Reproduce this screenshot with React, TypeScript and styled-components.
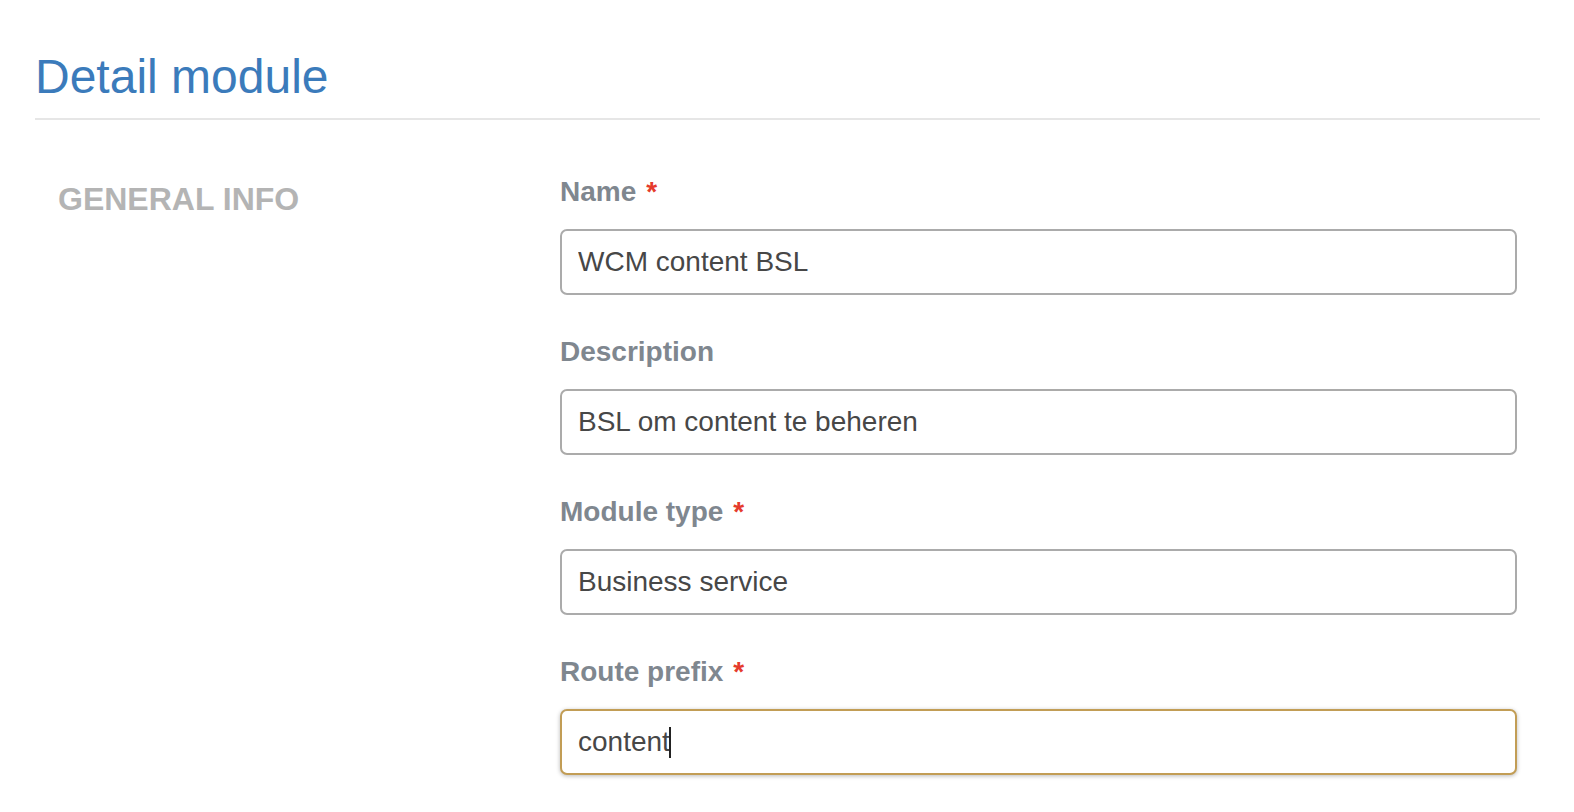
import React from "react";
import styled, { createGlobalStyle } from "styled-components";

const GlobalStyle = createGlobalStyle`
  html, body {
    margin: 0;
    padding: 0;
    background: #ffffff;
    font-family: "Liberation Sans", Arial, Helvetica, sans-serif;
  }
  * { box-sizing: border-box; }
`;

const Page = styled.div`
  padding: 0 34px 0 35px;
`;

const Header = styled.header`
  margin-top: 50px;
  padding-bottom: 15px;
  border-bottom: 2px solid #e6e6e6;
`;

const Title = styled.h1`
  margin: 0;
  font-size: 48px;
  line-height: 53px;
  font-weight: 400;
  color: #3b7bbb;
`;

const Body = styled.div`
  display: grid;
  grid-template-columns: 503px 1fr;
  padding: 0 23px 0 22px;
  margin-top: 52px;
`;

const SectionTitle = styled.h2`
  margin: 7px 0 0 1px;
  font-size: 32px;
  line-height: 40px;
  font-weight: 700;
  color: #b4b4b4;
  text-transform: uppercase;
`;

const Form = styled.div`
  display: flex;
  flex-direction: column;
`;

const Group = styled.div`
  display: flex;
  flex-direction: column;
  margin-bottom: 37px;
`;

const Label = styled.label`
  display: block;
  font-size: 28px;
  line-height: 40px;
  font-weight: 700;
  color: #7f878f;
  margin-bottom: 17px;
`;

const Required = styled.span`
  color: #e53b2c;
  margin-left: 10px;
`;

const FieldWrap = styled.div`
  position: relative;
`;

const Input = styled.input<{ $focused?: boolean }>`
  display: block;
  width: 100%;
  height: 66px;
  padding: 0 16px;
  font-family: "Liberation Sans", Arial, Helvetica, sans-serif;
  font-size: 28px;
  color: #474747;
  background: #ffffff;
  border: 2px solid ${(p) => (p.$focused ? "#c29d55" : "#ababab")};
  border-radius: 7px;
  outline: none;
  box-shadow: ${(p) => (p.$focused ? "0 1px 4px rgba(0,0,0,0.28)" : "none")};
`;

const Caret = styled.span`
  position: absolute;
  top: 18px;
  height: 31px;
  width: 2px;
  background: #222;
`;

type Field = {
  label: string;
  value: string;
  required?: boolean;
  focused?: boolean;
};

const fields: Field[] = [
  { label: "Name", value: "WCM content BSL", required: true },
  { label: "Description", value: "BSL om content te beheren" },
  { label: "Module type", value: "Business service", required: true },
  { label: "Route prefix", value: "content", required: true, focused: true },
];

export default function App() {
  return (
    <>
      <GlobalStyle />
      <Page>
        <Header>
          <Title>Detail module</Title>
        </Header>
        <Body>
          <SectionTitle>General info</SectionTitle>
          <Form>
            {fields.map((f, i) => (
              <Group key={f.label}>
                <Label htmlFor={`field-${i}`}>
                  {f.label}
                  {f.required && <Required>*</Required>}
                </Label>
                <FieldWrap>
                  <Input
                    id={`field-${i}`}
                    readOnly
                    value={f.value}
                    $focused={f.focused}
                  />
                  {f.focused && <Caret style={{ left: `${18 + 91}px` }} />}
                </FieldWrap>
              </Group>
            ))}
          </Form>
        </Body>
      </Page>
    </>
  );
}
